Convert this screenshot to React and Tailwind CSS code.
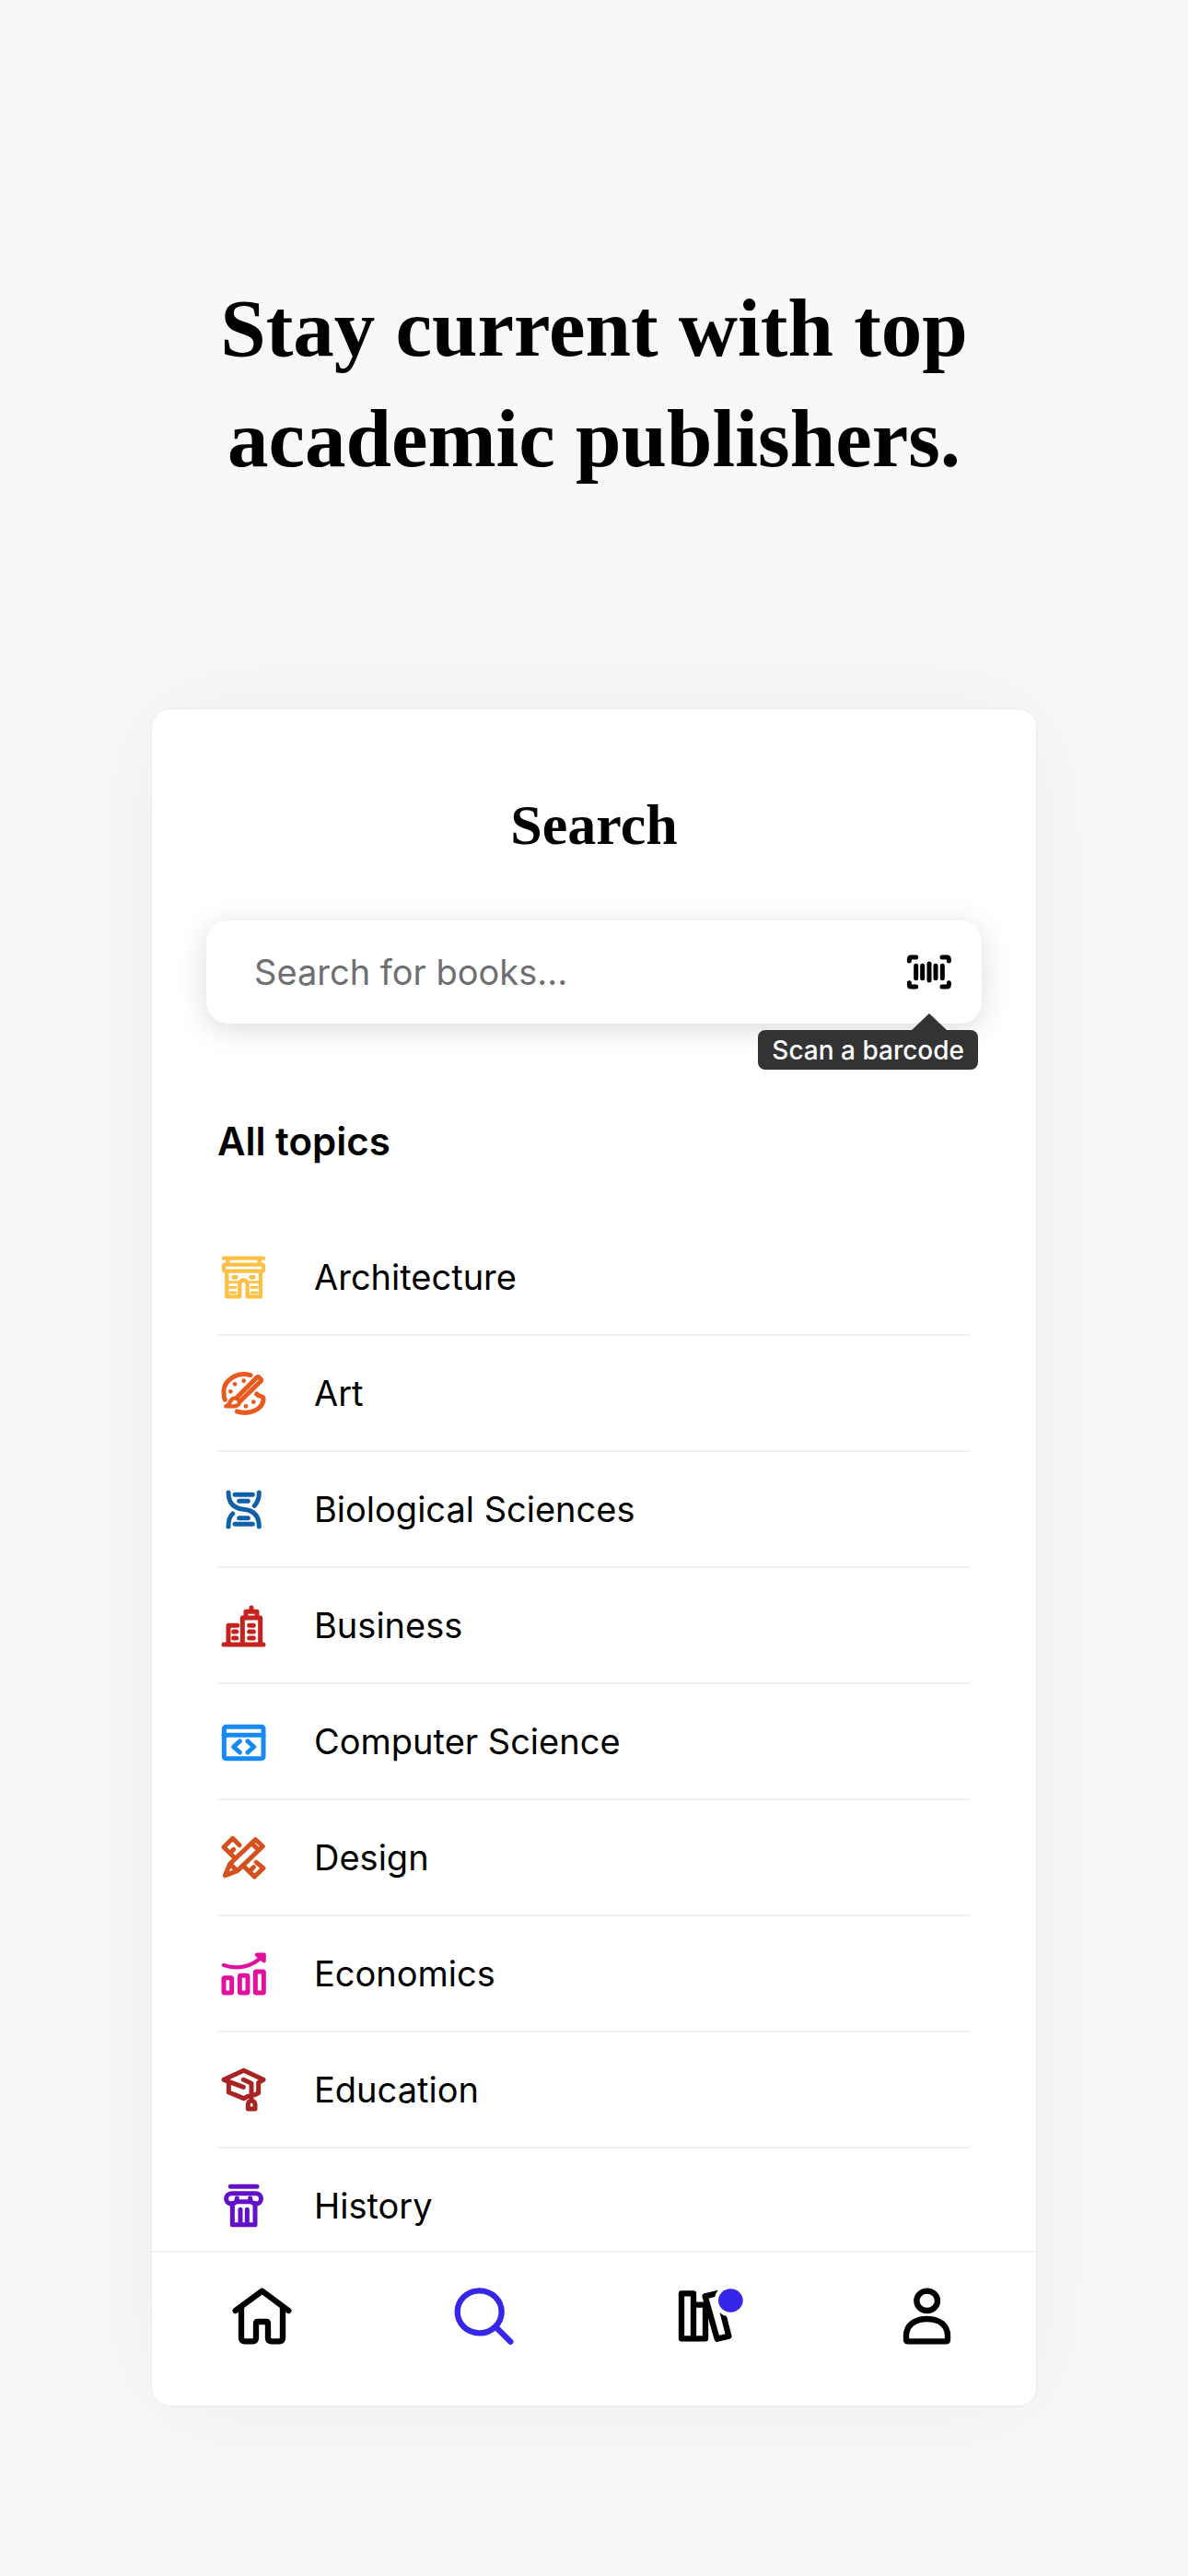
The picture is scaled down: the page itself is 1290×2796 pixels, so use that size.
import React from "react";

function Icon({ viewBox, className, stroke = 15, children }) {
  return (
    <svg
      viewBox={viewBox}
      className={className}
      fill="none"
      stroke="currentColor"
      strokeWidth={stroke}
      strokeLinecap="round"
      strokeLinejoin="round"
      aria-hidden="true"
    >
      {children}
    </svg>
  );
}

const topics = [
  {
    name: "Architecture",
    color: "text-[#fbc147]",
    viewBox: "57 57 156 156",
    art: (
      <>
        <path d="M69 74H198M82 80V92M185 80V92" strokeWidth="13" />
        <rect x="69" y="95" width="129" height="21" rx="5" strokeWidth="13" />
        <path d="M79 118V199H121V160C121 140 146 140 146 160V199H189V118" strokeWidth="13" />
        <path d="M101 136H109M158 136H166" strokeWidth="14" />
        <path d="M79 152H118M150 152H188" strokeWidth="8" />
        <path d="M90 169H108M90 186H108M159 169H177M159 186H177" strokeWidth="9" />
      </>
    ),
  },
  {
    name: "Art",
    color: "text-[#e85a1f]",
    viewBox: "57 435 156 156",
    art: (
      <>
        <path d="M156 455C115 442 66 470 69 512C69 522 70 529 73 535" />
        <path d="M176 516C184 528 200 518 198 535C195 565 155 586 112 573" />
        <path d="M112 527L176 463Q180 458 184 462L189 467Q193 471 189 475L122 540" />
        <path d="M76 556H106C120 553 123 543 117 535C110 527 97 528 91 539C88 547 84 552 76 556Z" strokeWidth="13" />
        <g fill="currentColor" stroke="none">
          <circle cx="134" cy="473" r="7" />
          <circle cx="105" cy="484" r="7" />
          <circle cx="91" cy="508" r="7" />
          <circle cx="166" cy="542" r="7" />
          <circle cx="141" cy="556" r="7" />
        </g>
      </>
    ),
  },
  {
    name: "Biological Sciences",
    color: "text-[#0f60a8]",
    viewBox: "57 63 156 156",
    art: (
      <>
        <path d="M84 87C84 122 103 139 134 142C166 145 184 164 184 198" />
        <path d="M184 87C184 108 178 120 169 130M98 156C88 165 84 180 84 198" />
        <path d="M105 94H163M119 115H148M119 170H148M105 190H163" />
      </>
    ),
  },
  {
    name: "Business",
    color: "text-[#c5221f]",
    viewBox: "57 441 156 156",
    art: (
      <>
        <path d="M69 582H198M84 580V520H113M130 580V495H188V580M141 495V475H177V495M159 462V474" />
        <path d="M152 520H166M152 540H166M152 561H166M101 540H110M101 561H110" />
      </>
    ),
  },
  {
    name: "Computer Science",
    color: "text-[#1789f5]",
    viewBox: "57 69 156 156",
    art: (
      <>
        <rect x="70" y="100" width="128" height="103" rx="6" />
        <path d="M69 127H198M121 147L101 165L121 183M147 147L167 165L147 183" />
      </>
    ),
  },
  {
    name: "Design",
    color: "text-[#d3511f]",
    viewBox: "57 447 156 156",
    art: (
      <>
        <path d="M120 485L98 463L69 492L105 527M93 507L101 499" />
        <path d="M175 541L198 560L169 588L132 552M157 566L166 557" />
        <path d="M73 584L89 546L172 467L196 489L113 569ZM90 547L112 568M160 480L183 501" />
      </>
    ),
  },
  {
    name: "Economics",
    color: "text-[#e2109f]",
    viewBox: "57 75 156 156",
    art: (
      <>
        <path d="M69 126C115 142 162 130 192 99M177 92H200V112L190 104Z" strokeWidth="13" />
        <rect x="69" y="167" width="26" height="49" rx="3" />
        <rect x="121" y="160" width="26" height="56" rx="3" />
        <rect x="172" y="147" width="27" height="69" rx="3" />
      </>
    ),
  },
  {
    name: "Education",
    color: "text-[#a92323]",
    viewBox: "57 453 156 156",
    art: (
      <>
        <path d="M133 523L69 499L134 469L198 499L182 508V542L170 548" />
        <path d="M85 508V540L134 560L148 553M133 499L159 511V562" />
        <path d="M148 594V579C148 564 171 564 171 579V594Z" />
      </>
    ),
  },
  {
    name: "History",
    color: "text-[#6211c8]",
    viewBox: "57 81 156 156",
    art: (
      <>
        <path d="M91 97H177" />
        <path d="M112 135C112 148 102 153 93 153C71 153 71 119 95 119H173C196 119 196 153 175 153C165 153 155 148 155 135" />
        <path d="M112 146H155M97 151V221H171V151M123 172V220M145 172V220" />
      </>
    ),
  },
];

const tabs = [
  {
    name: "Home",
    color: "text-black",
    viewBox: "297 173 216 216",
    art: (
      <>
        <path d="M317 263L404 199L490 263" />
        <path d="M336 252V350Q336 363 349 363H371Q384 363 384 350V305Q384 299 390 299H417Q423 299 423 305V350Q423 363 436 363H458Q471 363 471 350V252" />
      </>
    ),
  },
  {
    name: "Search",
    color: "text-[#3626e8]",
    viewBox: "1017 173 216 216",
    art: (
      <>
        <ellipse cx="1112" cy="267" rx="72" ry="69" />
        <path d="M1168 319L1213 364" />
      </>
    ),
  },
  {
    name: "Library",
    color: "text-black",
    viewBox: "237 173 216 216",
    art: (
      <>
        <path d="M270 207H309V354H270ZM309 244H348V354H309" />
        <path d="M347 216L388 206L424 346L386 355Z" />
        <circle cx="430" cy="230" r="53" fill="white" stroke="none" />
        <ellipse cx="430" cy="230" rx="40" ry="38" fill="#3626e8" stroke="none" />
      </>
    ),
  },
  {
    name: "Profile",
    color: "text-black",
    viewBox: "957 173 216 216",
    art: (
      <>
        <ellipse cx="1070" cy="231" rx="34" ry="32" />
        <path d="M1002 357V345C1002 312 1028 290 1070 290S1137 312 1137 345V357Q1137 363 1131 363H1008Q1002 363 1002 357Z" />
      </>
    ),
  },
];

function SearchBar() {
  return (
    <form
      className="mx-[59px] mt-[68px] flex h-28 items-center rounded-3xl bg-white pr-[31px] pl-[52px] shadow-[0_6px_32px_rgba(0,0,0,0.14)]"
      onSubmit={(e) => e.preventDefault()}
    >
      <input
        type="text"
        aria-label="Search for books"
        placeholder="Search for books..."
        className="h-full min-w-0 flex-1 bg-transparent text-[38px] text-black outline-none placeholder:text-[#6e6e73]"
      />
      <button type="button" className="relative" aria-label="Scan a barcode" aria-describedby="scan-tip">
        <Icon viewBox="69 57 156 156" className="size-[52px] text-black">
          <path d="M82 99V94Q82 87 89 87H104M189 87H204Q211 87 211 94V99M82 170V176Q82 183 89 183H104M189 183H204Q211 183 211 176V170" />
          <path d="M104 115V155M125 115V155M147 108V162M168 115V155M190 115V155" />
        </Icon>
        <span
          id="scan-tip"
          role="tooltip"
          className="absolute top-[71px] -right-[27px] flex flex-col items-end"
        >
          <svg viewBox="0 0 38 18" className="mr-[34px] h-[18px] w-[38px]" aria-hidden="true">
            <path d="M0 18L19 0L38 18Z" fill="#333333" />
          </svg>
          <span className="flex h-[43px] items-center rounded-lg bg-[#333333] px-[15px] text-[28px] font-medium whitespace-nowrap text-white">
            Scan a barcode
          </span>
        </span>
      </button>
    </form>
  );
}

function TopicList() {
  return (
    <section className="mx-[71px]">
      <h3 className="mt-[104px] text-[42px] leading-[48px] font-semibold">All topics</h3>
      <ul className="mt-[61px] max-h-[1119px] overflow-hidden">
        {topics.map((t) => (
          <li key={t.name} className="h-[126px] border-b-2 border-[#f2f2f2]">
            <a href="#" className="flex h-full items-center gap-[50px] pl-[3px] text-[38px]">
              <Icon viewBox={t.viewBox} className={`size-[52px] shrink-0 ${t.color}`}>
                {t.art}
              </Icon>
              {t.name}
            </a>
          </li>
        ))}
      </ul>
    </section>
  );
}

function TabBar() {
  return (
    <nav className="flex h-[168px] border-t-2 border-[#f2f2f2] pt-[33px]">
      {tabs.map((t) => (
        <a key={t.name} href="#" aria-label={t.name} className="flex flex-1 items-start justify-center">
          <Icon viewBox={t.viewBox} stroke={19} className={`size-[72px] overflow-visible ${t.color}`}>
            {t.art}
          </Icon>
        </a>
      ))}
    </nav>
  );
}

export default function App() {
  return (
    <main className="min-h-screen bg-[#f9f8f6] pt-[296px] pb-[185px] font-['Inter',sans-serif] text-black">
      <h1 className="text-center font-['Liberation_Serif',serif] text-[89px] leading-[120px] font-bold">
        Stay current with top
        <br />
        academic publishers.
      </h1>
      <div className="mx-auto mt-[234px] w-full max-w-[960px] rounded-[20px] bg-white pt-[89px] shadow-[0_0_2px_1px_rgba(0,0,0,0.03),0_0_120px_rgba(0,0,0,0.05)]">
        <h2 className="text-center font-['Liberation_Serif',serif] text-[62px] leading-[72px] font-bold">Search</h2>
        <SearchBar />
        <TopicList />
        <TabBar />
      </div>
    </main>
  );
}
